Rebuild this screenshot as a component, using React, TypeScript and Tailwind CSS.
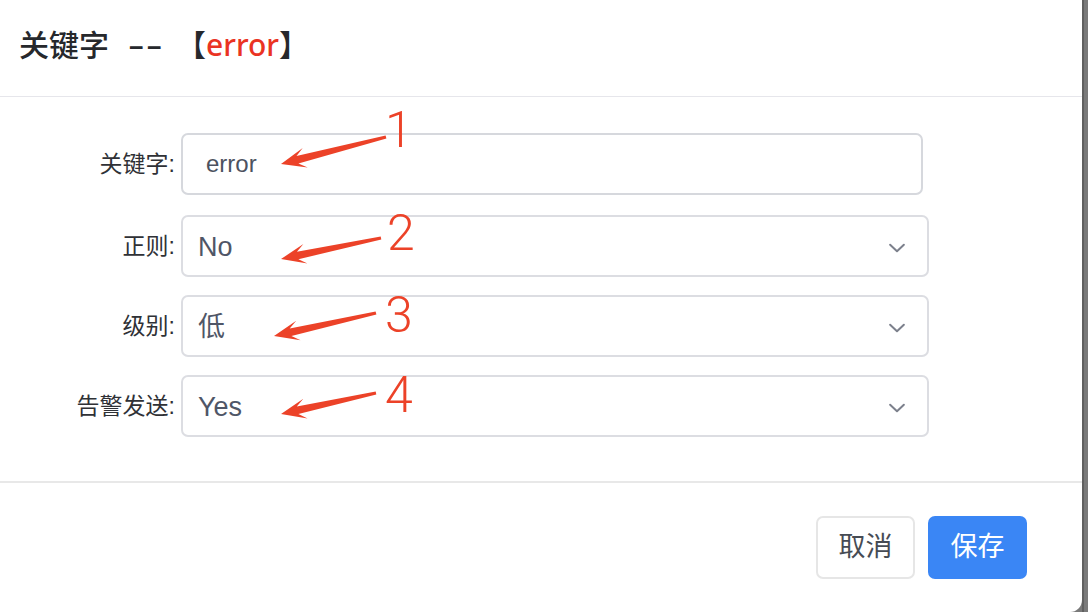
import React from "react";

const FONT = { fontFamily: '"Liberation Sans", "Noto Sans CJK SC", sans-serif' };

type Pt = [number, number];

// annotation arrow drawn as a tapered shaft with a notched head
const arrowPoints = (tail: Pt, tip: Pt) => {
  const dx = tail[0] - tip[0];
  const dy = tail[1] - tip[1];
  const len = Math.hypot(dx, dy);
  const vx = dx / len;
  const vy = dy / len;
  const nx = -vy;
  const ny = vx;
  const at = (d: number, w: number): string =>
    `${(tip[0] + vx * d + nx * w).toFixed(1)},${(tip[1] + vy * d + ny * w).toFixed(1)}`;
  return [
    at(len, 1.6),
    at(17, 3.8),
    at(25, 10),
    at(0, 0),
    at(25, -10),
    at(17, -3.8),
    at(len, -1.6),
  ].join(" ");
};

const arrows: { tail: Pt; tip: Pt; n: string; x: number; y: number }[] = [
  { tail: [386, 137], tip: [281, 164], n: "1", x: 385, y: 105 },
  { tail: [381, 238], tip: [281, 259], n: "2", x: 387, y: 208 },
  { tail: [376, 313], tip: [274, 336], n: "3", x: 385, y: 290 },
  { tail: [376, 393], tip: [281, 414], n: "4", x: 385, y: 370 },
];

const Chevron = () => (
  <svg width="22" height="22" viewBox="0 0 24 24" fill="none" stroke="#7c808c" strokeWidth="2.2" strokeLinecap="round" strokeLinejoin="round">
    <path d="M4.5 8.5l7.5 7 7.5-7" />
  </svg>
);

const Row = ({ label, children }: { label: string; children: React.ReactNode }) => (
  <div className="flex items-center">
    <div className="w-[176px] shrink-0 pr-[1px] text-right text-[23px] text-[#2f3136]">{label}:</div>
    <div className="ml-[5px]">{children}</div>
  </div>
);

const SelectBox = ({ value }: { value: string }) => (
  <div className="flex h-[62px] w-[748px] items-center justify-between rounded-[7px] border-2 border-[#dcdde2] pt-[3px] pl-[15px] pr-[19px]">
    <span className="text-[27px] text-[#4f5667]">{value}</span>
    <Chevron />
  </div>
);

export default function App() {
  return (
    <div className="flex h-[612px] w-[1088px] bg-[#7a7a7a]" style={FONT}>
      <div className="relative flex h-full w-[1082px] flex-col rounded-br-[12px] bg-white">
        <div className="flex h-[97px] items-center border-b border-[#e6e6eb] pb-[8px] pl-[19px]">
          <span
            className="flex items-center text-[30px] font-medium text-[#26282c]"
            style={{ fontFamily: '"Noto Sans", "Noto Sans CJK SC", sans-serif' }}
          >
            关键字
            <span className="ml-[19px] mr-[12px] inline-block w-[36px] origin-left scale-x-[1.7] tracking-[1px]">--</span>
            【<span className="text-[#ea3323]">error</span>】
          </span>
        </div>

        <div className="flex flex-col gap-[18px] pt-[36px] pb-[44px]">
          <div className="mb-[2px]">
            <Row label="关键字">
              <div className="flex h-[62px] w-[742px] items-center rounded-[7px] border-2 border-[#d6d8dd] pl-[23px]">
                <span className="text-[24px] text-[#4c5260]">error</span>
              </div>
            </Row>
          </div>
          <Row label="正则">
            <SelectBox value="No" />
          </Row>
          <Row label="级别">
            <SelectBox value="低" />
          </Row>
          <Row label="告警发送">
            <SelectBox value="Yes" />
          </Row>
        </div>

        <div className="flex flex-1 items-start justify-end gap-[13px] border-t-2 border-[#e8e8e8] pt-[33px] pr-[55px]">
          <button className="h-[63px] w-[99px] rounded-[7px] border-2 border-[#e6e6e6] bg-white text-[27px] text-[#464b54]">
            取消
          </button>
          <button className="h-[63px] w-[99px] rounded-[7px] bg-[#3a86f5] text-[27px] text-white">
            保存
          </button>
        </div>

        <svg className="pointer-events-none absolute left-0 top-0" width="1082" height="612">
          {arrows.map((a) => (
            <polygon key={a.n} points={arrowPoints(a.tail, a.tip)} fill="#ec4228" />
          ))}
        </svg>
        {arrows.map((a) => (
          <span
            key={a.n}
            className="absolute text-[50px] leading-none text-[#ec4228]"
            style={{ left: a.x, top: a.y, fontFamily: "Roboto, sans-serif", fontWeight: 300 }}
          >
            {a.n}
          </span>
        ))}
      </div>
      <div className="h-full w-[2px] bg-[#606060]" />
      <div className="h-full flex-1 bg-[#7a7a7a]" />
    </div>
  );
}
